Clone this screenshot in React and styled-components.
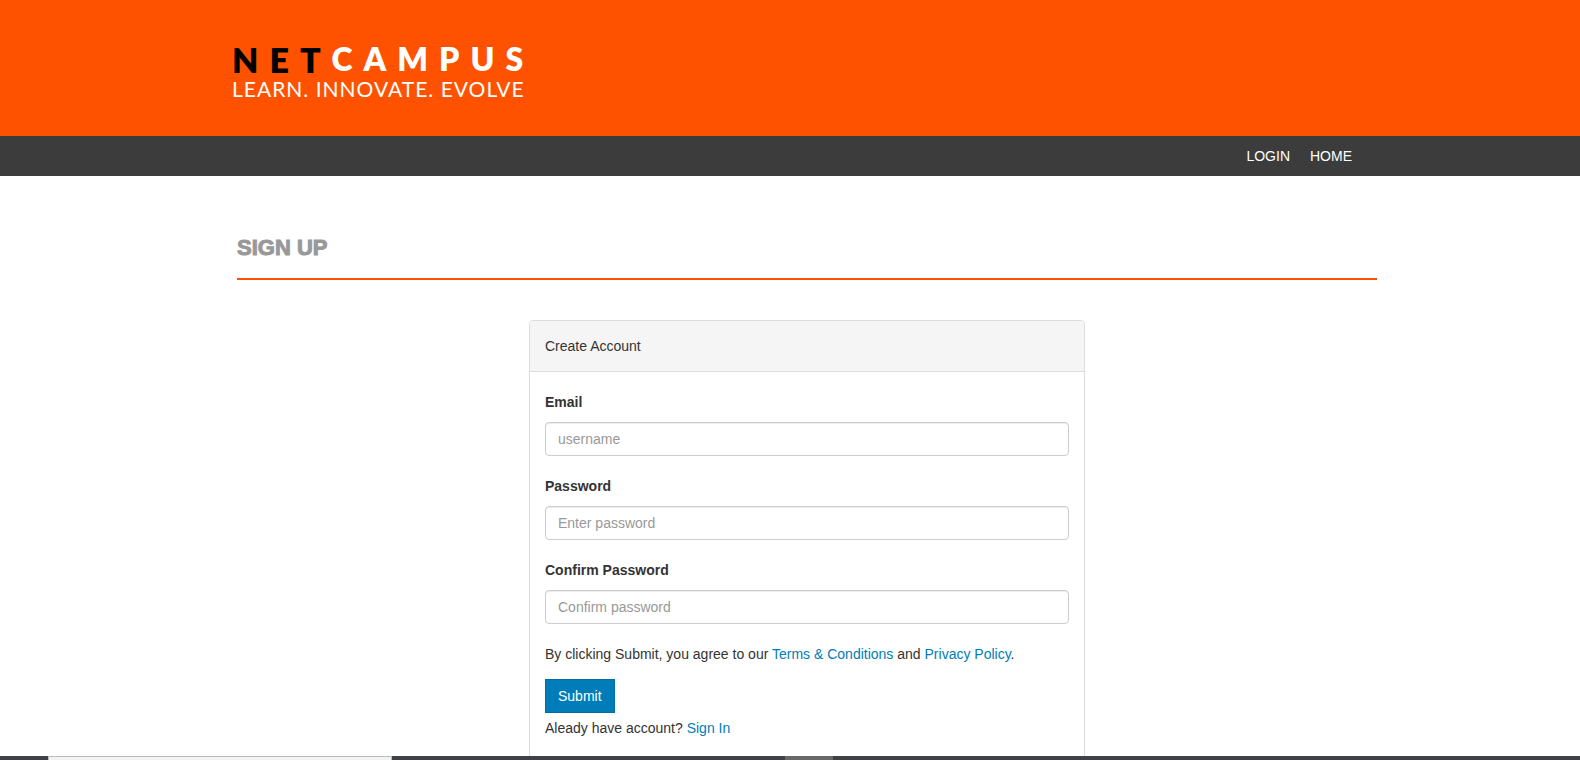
import React from "react";
import styled, { createGlobalStyle } from "styled-components";

const GlobalStyle = createGlobalStyle`
  *, *::before, *::after { box-sizing: border-box; }
  body {
    margin: 0;
    background: #fff;
    color: #333;
    font: 14px/20px "Liberation Sans", Arial, sans-serif;
  }
`;

const Screen = styled.div`
  display: flex;
  flex-direction: column;
  height: 100vh;
`;

const Viewport = styled.div`
  flex: 1;
  min-height: 0;
  overflow: hidden;
`;

const Container = styled.div`
  width: 100%;
  max-width: 1174px;
  margin: 0 auto;
  padding-left: 34px;
`;

const Masthead = styled.header`
  background: #ff5200;
  padding: 40px 0 36px;
`;

const Brand = styled.a`
  display: flex;
  flex-direction: column;
  margin-left: -5px;
  color: #fff;
  text-decoration: none;
  white-space: nowrap;
`;

const Wordmark = styled.span`
  display: flex;
  align-items: flex-start;
  height: 38px;
`;

const Net = styled.span`
  color: #000;
  font: 800 34px/40px Lato, sans-serif;
  letter-spacing: 11px;
`;

const Campus = styled.span`
  font: 800 32px/38px Lato, sans-serif;
  letter-spacing: 11px;
`;

const Tagline = styled.span`
  font: 400 21px/22px Lato, sans-serif;
  letter-spacing: 1px;
`;

const NavBar = styled.nav`
  background: #3c3c3c;
`;

const NavList = styled.ul`
  display: flex;
  justify-content: flex-end;
  margin: 0;
  padding: 0 15px 0 0;
  list-style: none;
`;

const NavLink = styled.a`
  display: block;
  padding: 10px;
  color: #fff;
  text-decoration: none;
`;

const PageTitle = styled.h1`
  margin: 0 0 40px;
  padding: 60px 0 18px;
  border-bottom: 2px solid #ff5200;
  color: #999;
  font: 900 22px/24px "Arial Black", "Liberation Sans", sans-serif;
  -webkit-text-stroke: 1px #999;
`;

const Card = styled.section`
  width: 556px;
  max-width: 100%;
  margin: 0 auto;
  border: 1px solid #ddd;
  border-radius: 4px;
  background: #fff;
`;

const CardHeader = styled.h2`
  margin: 0;
  padding: 15px;
  border-bottom: 1px solid #ddd;
  border-radius: 3px 3px 0 0;
  background: #f5f5f5;
  font-size: 14px;
  font-weight: 400;
  line-height: 20px;
`;

const Form = styled.form`
  padding: 20px 15px;
`;

const Field = styled.div`
  display: flex;
  flex-direction: column;
  gap: 10px;
  margin-bottom: 20px;
`;

const Label = styled.label`
  font-weight: 700;
`;

const Input = styled.input`
  width: 100%;
  height: 34px;
  padding: 6px 12px;
  border: 1px solid #ccc;
  border-radius: 4px;
  background: #fff;
  box-shadow: inset 0 1px 1px rgba(0, 0, 0, 0.075);
  color: #555;
  font: inherit;

  &::placeholder {
    color: #999;
    opacity: 1;
  }
`;

const Note = styled.p`
  margin: ${({ $gap }) => $gap};
`;

const TextLink = styled.a`
  color: #007db8;
  text-decoration: none;
`;

const SubmitButton = styled.button`
  display: block;
  height: 34px;
  padding: 6px 12px;
  border: 1px solid #006ea3;
  border-radius: 0;
  background: #007db8;
  color: #fff;
  font: inherit;
  cursor: pointer;
`;

const Taskbar = styled.footer`
  display: flex;
  height: 4px;
  padding-left: 48px;
  background: #3e4145;
`;

const SearchStrip = styled.div`
  width: 344px;
  margin-right: 393px;
  border: solid #bdbdbd;
  border-width: 1px 1px 0;
  background: #f2f2f2;
`;

const ActiveTask = styled.div`
  width: 48px;
  background: #686868;
`;

const FIELDS = [
  { id: "email", label: "Email", type: "text", placeholder: "username" },
  { id: "password", label: "Password", type: "password", placeholder: "Enter password" },
  { id: "confirm", label: "Confirm Password", type: "password", placeholder: "Confirm password" },
];

export default function App() {
  return (
    <Screen>
      <GlobalStyle />
      <Viewport>
        <Masthead>
          <Container>
            <Brand href="#home">
              <Wordmark>
                <Net>NET</Net>
                <Campus>CAMPUS</Campus>
              </Wordmark>
              <Tagline>LEARN. INNOVATE. EVOLVE</Tagline>
            </Brand>
          </Container>
        </Masthead>
        <NavBar>
          <Container>
            <NavList>
              <li><NavLink href="#login">LOGIN</NavLink></li>
              <li><NavLink href="#home">HOME</NavLink></li>
            </NavList>
          </Container>
        </NavBar>
        <Container as="main">
          <PageTitle>SIGN UP</PageTitle>
          <Card>
            <CardHeader>Create Account</CardHeader>
            <Form onSubmit={(event) => event.preventDefault()}>
              {FIELDS.map(({ id, label, type, placeholder }) => (
                <Field key={id}>
                  <Label htmlFor={id}>{label}</Label>
                  <Input id={id} type={type} placeholder={placeholder} />
                </Field>
              ))}
              <Note $gap="0 0 15px">
                By clicking Submit, you agree to our{" "}
                <TextLink href="#terms">Terms &amp; Conditions</TextLink> and{" "}
                <TextLink href="#privacy">Privacy Policy</TextLink>.
              </Note>
              <SubmitButton type="submit">Submit</SubmitButton>
              <Note $gap="5px 0 0">
                Aleady have account? <TextLink href="#signin">Sign In</TextLink>
              </Note>
            </Form>
          </Card>
        </Container>
      </Viewport>
      <Taskbar>
        <SearchStrip />
        <ActiveTask />
      </Taskbar>
    </Screen>
  );
}
